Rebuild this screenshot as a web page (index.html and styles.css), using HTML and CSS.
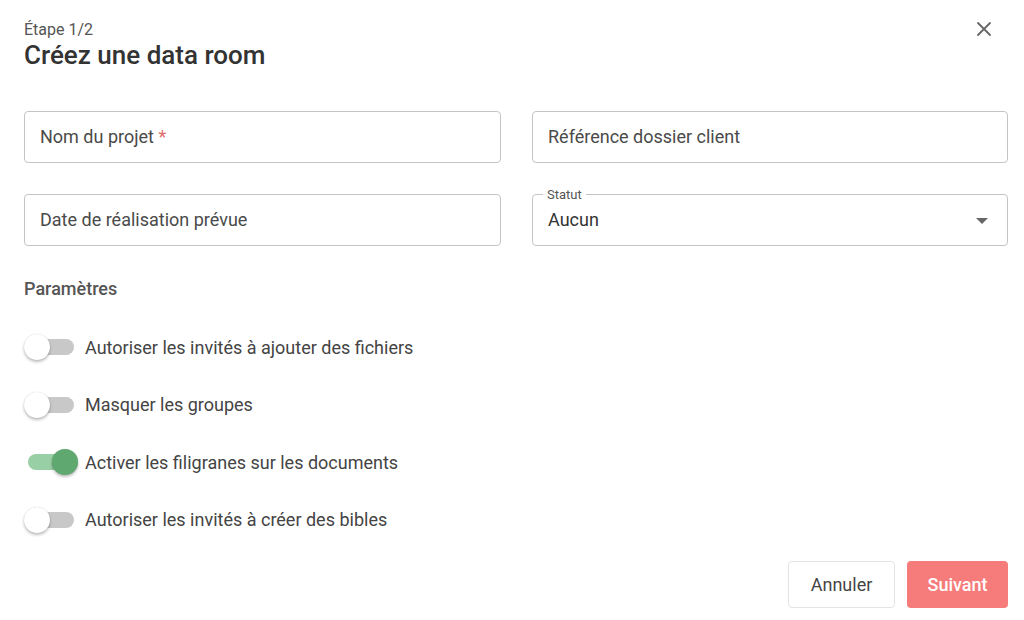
FILE: index.html
```html
<!DOCTYPE html>
<html lang="fr">
<head>
<meta charset="utf-8">
<link rel="stylesheet" href="styles.css">
</head>
<body>
<div class="dialog">
  <div class="header">
    <div class="heading">
      <div class="step">Étape 1/2</div>
      <h1 class="title">Créez une data room</h1>
    </div>
    <button class="close" aria-label="Fermer">
      <svg width="16" height="16" viewBox="0 0 16 16"><path d="M2 2 L14 14 M14 2 L2 14" stroke="#666" stroke-width="1.8" fill="none" stroke-linecap="round"/></svg>
    </button>
  </div>

  <div class="fields">
    <div class="field"><span class="placeholder">Nom du projet <span class="req">*</span></span></div>
    <div class="field"><span class="placeholder">Référence dossier client</span></div>
    <div class="field"><span class="placeholder">Date de réalisation prévue</span></div>
    <div class="field select">
      <span class="legend">Statut</span>
      <span class="value">Aucun</span>
      <svg class="caret" width="12" height="7" viewBox="0 0 12 7"><path d="M0 0 L12 0 L6 6 Z" fill="#666"/></svg>
    </div>
  </div>

  <div class="section">Paramètres</div>

  <div class="toggles">
    <div class="toggle-row"><span class="switch"><span class="track"></span><span class="thumb"></span></span><span class="tlabel">Autoriser les invités à ajouter des fichiers</span></div>
    <div class="toggle-row"><span class="switch"><span class="track"></span><span class="thumb"></span></span><span class="tlabel">Masquer les groupes</span></div>
    <div class="toggle-row"><span class="switch on"><span class="track"></span><span class="thumb"></span></span><span class="tlabel">Activer les filigranes sur les documents</span></div>
    <div class="toggle-row"><span class="switch"><span class="track"></span><span class="thumb"></span></span><span class="tlabel">Autoriser les invités à créer des bibles</span></div>
  </div>

  <div class="actions">
    <button class="btn cancel">Annuler</button>
    <button class="btn next">Suivant</button>
  </div>
</div>
</body>
</html>
```

FILE: styles.css
```css
* { box-sizing: border-box; }
html, body { margin: 0; background: #fff; }
body {
  font-family: Roboto, "Noto Sans", Arial, sans-serif;
  color: #333;
  width: 1024px;
  height: 620px;
  overflow: hidden;
}
.dialog {
  padding: 21px 16px 0 24px;
}
.header {
  display: flex;
  justify-content: space-between;
  align-items: flex-start;
  height: 70px;
}
.step {
  font-size: 16px;
  line-height: 18px;
  color: #555;
}
.title {
  margin: 0;
  font-size: 26px;
  line-height: 32px;
  font-weight: 500;
  color: #333;
}
.close {
  border: none;
  background: none;
  padding: 0;
  margin: 0 16px 0 0;
  width: 16px;
  height: 16px;
  cursor: pointer;
}
.fields {
  margin-top: 20px;
  display: grid;
  grid-template-columns: 477px 476px;
  column-gap: 31px;
  row-gap: 31px;
}
.field {
  position: relative;
  height: 52px;
  border: 1px solid #c4c4c4;
  border-radius: 4px;
  display: flex;
  align-items: center;
  padding: 0 15px 1px;
  font-size: 18px;
  color: #4a4a4a;
}
.req { color: #e06a6a; }
.select .legend {
  position: absolute;
  top: -7px;
  left: 10px;
  padding: 0 4px;
  background: #fff;
  font-size: 13px;
  line-height: 14px;
  color: #555;
}
.select .value { color: #333; }
.caret {
  position: absolute;
  right: 19px;
  top: 23px;
}
.section {
  margin-top: 33px;
  font-size: 18px;
  line-height: 20px;
  font-weight: 500;
  color: #555;
}
.toggles {
  margin-top: 35px;
  display: flex;
  flex-direction: column;
  gap: 31.5px;
}
.toggle-row {
  display: flex;
  align-items: center;
  height: 26px;
}
.switch {
  position: relative;
  width: 50px;
  height: 26px;
  margin-right: 11px;
  flex: none;
}
.track {
  position: absolute;
  left: 4px;
  top: 5px;
  width: 46px;
  height: 16px;
  border-radius: 8px;
  background: #c8c8c8;
}
.thumb {
  position: absolute;
  left: 0;
  top: 0;
  width: 26px;
  height: 26px;
  border-radius: 50%;
  background: #fff;
  box-shadow: 0 2px 3px rgba(0,0,0,0.25), 0 0 1px rgba(0,0,0,0.2);
}
.switch.on .track { background: #98cfa4; }
.switch.on .thumb { left: 28px; background: #5fa870; }
.tlabel {
  font-size: 18px;
  color: #444;
}
.actions {
  margin-top: 28px;
  display: flex;
  justify-content: flex-end;
  gap: 12px;
}
.btn {
  font-family: Roboto, "Noto Sans", Arial, sans-serif;
  font-size: 18px;
  height: 47px;
  border-radius: 4px;
  cursor: pointer;
}
.cancel {
  width: 107px;
  background: #fff;
  border: 1px solid #e4e4e4;
  color: #444;
}
.next {
  width: 101px;
  background: #f67b7b;
  border: none;
  color: #fff;
  font-weight: 500;
}
```
